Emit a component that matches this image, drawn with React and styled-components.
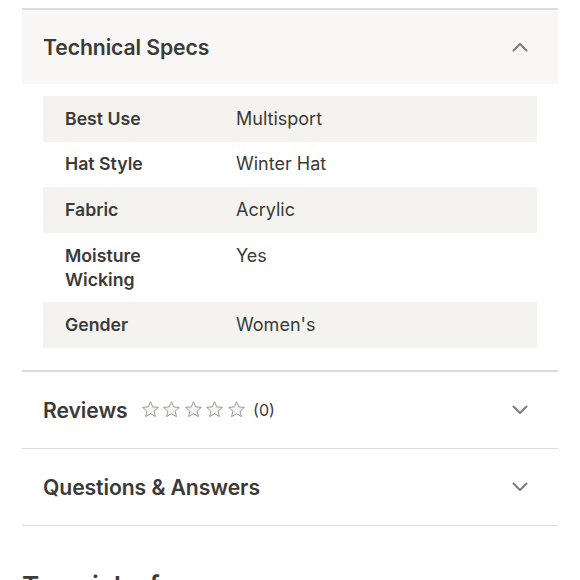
import React from "react";
import styled, { createGlobalStyle } from "styled-components";

const Global = createGlobalStyle`
  html, body { margin: 0; padding: 0; background: #fff; }
  body { font-family: Inter, "Noto Sans", Arial, sans-serif; color: #3b3a38; overflow: hidden; }
`;

const Page = styled.div`
  padding: 8px 22px 0;
  width: 580px;
  box-sizing: border-box;
`;

const Section = styled.section`
  border-top: ${(p) => (p.$thick ? "2px" : "1.5px")} solid #dedcd8;
  background: ${(p) => (p.$open ? "#f8f7f5" : "#fff")};
`;

const Header = styled.div`
  display: flex;
  align-items: center;
  justify-content: space-between;
  height: ${(p) => p.$h}px;
  padding: 0 30px 0 21px;
`;

const TitleWrap = styled.div`
  display: flex;
  align-items: center;
  gap: 13px;
`;

const Title = styled.h2`
  margin: 0;
  font-size: 21.2px;
  font-weight: 600;
  letter-spacing: -0.1px;
  color: #3b3a38;
`;

const Body = styled.div`
  padding: 12px 21px 22px;
  background: #fff;
`;

const Table = styled.div`
  display: flex;
  flex-direction: column;
`;

const Row = styled.div`
  display: grid;
  grid-template-columns: 171px 1fr;
  padding: 10.8px 22px;
  background: ${(p) => (p.$striped ? "#f4f3f0" : "#fff")};
  font-size: 17.7px;
  line-height: 24px;
`;

const Label = styled.div`
  font-weight: 600;
  color: #3b3a38;
`;

const Value = styled.div`
  font-weight: 400;
  font-size: 18px;
  color: #3b3a38;
`;

const Stars = styled.div`
  display: flex;
  align-items: center;
  gap: 2.5px;
  font-size: 16px;
  color: #3b3a38;
`;

const Count = styled.span`
  margin-left: 5px;
`;

const Footer = styled.div`
  border-top: 1.5px solid #dedcd8;
  padding-top: 44px;
`;

const Big = styled.h2`
  margin: 0;
  font-size: 26px;
  font-weight: 600;
  color: #3b3a38;
`;

const Chevron = ({ up }) => (
  <svg width="16" height="10" viewBox="0 0 16 10" fill="none">
    <path
      d={up ? "M1.5 8.5 L8 2 L14.5 8.5" : "M1.5 1.5 L8 8 L14.5 1.5"}
      stroke="#7d7c7a"
      strokeWidth="2"
      strokeLinecap="round"
      strokeLinejoin="round"
    />
  </svg>
);

const Star = () => (
  <svg width="19" height="19" viewBox="0 0 24 24">
    <path
      d="M12 2.2l2.9 6.5 7.1.6-5.4 4.7 1.6 7-6.2-3.7-6.2 3.7 1.6-7L2 9.3l7.1-.6z"
      fill="#f3f3f2"
      stroke="#8e8d8b"
      strokeWidth="1.1"
      strokeLinejoin="round"
    />
  </svg>
);

const specs = [
  ["Best Use", "Multisport"],
  ["Hat Style", "Winter Hat"],
  ["Fabric", "Acrylic"],
  ["Moisture Wicking", "Yes"],
  ["Gender", "Women's"],
];

export default function App() {
  return (
    <Page>
      <Global />
      <Section $thick $open>
        <Header $h={74}>
          <Title>Technical Specs</Title>
          <Chevron up />
        </Header>
        <Body>
          <Table>
            {specs.map(([k, v], i) => (
              <Row key={k} $striped={i % 2 === 0}>
                <Label>{k === "Moisture Wicking" ? <>Moisture<br />Wicking</> : k}</Label>
                <Value>{v}</Value>
              </Row>
            ))}
          </Table>
        </Body>
      </Section>
      <Section $thick>
        <Header $h={76}>
          <TitleWrap>
            <Title>Reviews</Title>
            <Stars>
              <Star /><Star /><Star /><Star /><Star />
              <Count>(0)</Count>
            </Stars>
          </TitleWrap>
          <Chevron />
        </Header>
      </Section>
      <Section>
        <Header $h={76}>
          <Title>Questions &amp; Answers</Title>
          <Chevron />
        </Header>
      </Section>
      <Footer>
        <Big>Top picks for you</Big>
      </Footer>
    </Page>
  );
}
